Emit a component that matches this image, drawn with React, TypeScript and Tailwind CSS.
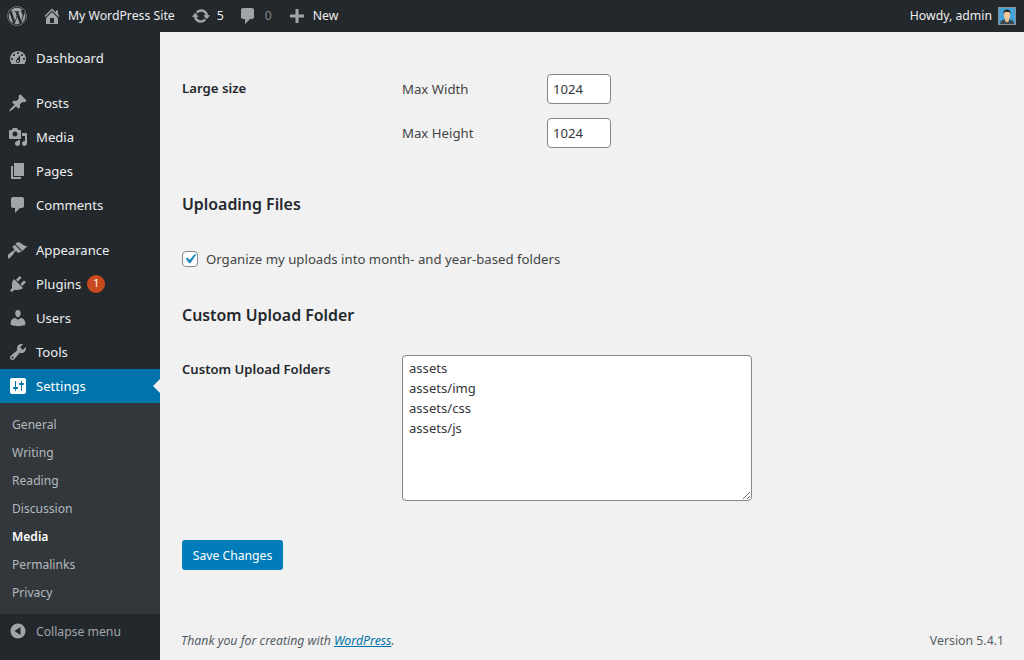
import React from 'react';
import { FaWordpress } from 'react-icons/fa';

// dashicons, 20x20
const icons: Record<string, string> = {
  dashboard:
    'M3.76 16h12.48c1.1-1.37 1.76-3.11 1.76-5 0-4.42-3.58-8-8-8s-8 3.58-8 8c0 1.89.66 3.63 1.76 5zM10 4c.55 0 1 .45 1 1s-.45 1-1 1-1-.45-1-1 .45-1 1-1zM6 6c.55 0 1 .45 1 1s-.45 1-1 1-1-.45-1-1 .45-1 1-1zm8 0c.55 0 1 .45 1 1s-.45 1-1 1-1-.45-1-1 .45-1 1-1zm-5.37 5.55L12 7v6c0 1.1-.9 2-2 2s-2-.9-2-2c0-.57.24-1.08.63-1.45zM4 10c.55 0 1 .45 1 1s-.45 1-1 1-1-.45-1-1 .45-1 1-1zm12 0c.55 0 1 .45 1 1s-.45 1-1 1-1-.45-1-1 .45-1 1-1zm-5 3c0-.55-.45-1-1-1s-1 .45-1 1 .45 1 1 1 1-.45 1-1z',
  post:
    'M10.44 3.02l1.82-1.82 6.36 6.35-1.83 1.82c-1.05-.68-2.48-.57-3.41.36l-.75.75c-.92.93-1.04 2.35-.35 3.41l-1.83 1.82-2.41-2.41-2.8 2.79c-.42.42-3.38 2.71-3.8 2.29s1.86-3.39 2.28-3.81l2.79-2.79L4.1 9.36l1.83-1.82c1.05.69 2.48.57 3.4-.36l.75-.75c.93-.92 1.05-2.35.36-3.41z',
  media:
    'M13 11V4c0-.55-.45-1-1-1h-1.67L9 1H5L3.67 3H2c-.55 0-1 .45-1 1v7c0 .55.45 1 1 1h10c.55 0 1-.45 1-1zM7 4.5c1.38 0 2.5 1.12 2.5 2.5S8.38 9.5 7 9.5 4.5 8.38 4.5 7 5.62 4.5 7 4.5zM14 6h5v10.5c0 1.38-1.12 2.5-2.5 2.5S14 17.88 14 16.5s1.12-2.5 2.5-2.5c.17 0 .34.02.5.05V9h-3V6zm-4 8.05V13h2v3.5c0 1.38-1.12 2.5-2.5 2.5S7 17.88 7 16.5 8.12 14 9.5 14c.17 0 .34.02.5.05z',
  page: 'M6 15V2h10v13H6zm-1 1h8v2H3V5h2v11z',
  comments:
    'M5 2h9c1.1 0 2 .9 2 2v7c0 1.1-.9 2-2 2h-2l-5 5v-5H5c-1.1 0-2-.9-2-2V4c0-1.1.9-2 2-2z',
  appearance:
    'M14.48 11.06L7.41 3.99l1.5-1.5c.5-.56 2.3-.47 3.51.32 1.21.8 1.43 1.28 2.91 2.1 1.18.64 2.45 1.26 4.45.85zm-.71.71L6.7 4.7 4.93 6.47c-.39.39-.39 1.02 0 1.41l1.06 1.06c.39.39.39 1.03 0 1.42-.6.6-6.54 3.86-6.99 6.42-.1.56 1.09 1.75 1.65 1.65 2.56-.45 5.82-6.39 6.42-6.99.39-.39 1.03-.39 1.42 0l1.06 1.06c.39.39 1.02.39 1.41 0z',
  plugin:
    'M13.11 4.36L9.87 7.6 8 5.73l3.24-3.24c.35-.34 1.05-.2 1.56.32.52.51.66 1.21.31 1.55zm-8 1.77l.91-1.12 9.01 9.01-1.19.84c-.71.71-2.63 1.16-3.82 1.16H6.14L4.9 17.26c-.59.59-1.54.59-2.12 0-.59-.58-.59-1.53 0-2.12l1.24-1.24v-3.88c0-1.13.4-3.19 1.09-3.89zm7.26 3.97l3.24-3.24c.34-.35 1.04-.21 1.55.31.52.51.66 1.21.31 1.55l-3.24 3.25z',
  users:
    'M10 9.25c-2.27 0-2.73-3.44-2.73-3.44C7 4.02 7.82 2 9.97 2c2.16 0 2.98 2.02 2.71 3.81 0 0-.41 3.44-2.68 3.44zm0 2.57L12.72 10c2.39 0 4.52 2.33 4.52 4.53v2.49s-3.65 1.13-7.24 1.13c-3.65 0-7.24-1.13-7.24-1.13v-2.49c0-2.25 1.94-4.48 4.47-4.48z',
  tools:
    'M16.68 9.77c-1.34 1.34-3.3 1.67-4.95.99l-5.41 6.52c-.99.99-2.59.99-3.58 0s-.99-2.59 0-3.57l6.52-5.42c-.68-1.65-.35-3.61.99-4.95 1.28-1.28 3.12-1.62 4.72-1.06l-2.89 2.89 2.82 2.82 2.86-2.87c.53 1.58.18 3.39-1.08 4.65zM3.81 16.21c.4.39 1.04.39 1.43 0 .4-.4.4-1.04 0-1.43-.39-.4-1.03-.4-1.43 0-.39.39-.39 1.03 0 1.43z',
  settings:
    'M18 16V4c0-1.1-.9-2-2-2H4c-1.1 0-2 .9-2 2v12c0 1.1.9 2 2 2h12c1.1 0 2-.9 2-2zM8 11h1c.55 0 1 .45 1 1s-.45 1-1 1H8v1.5c0 .28-.22.5-.5.5s-.5-.22-.5-.5V13H6c-.55 0-1-.45-1-1s.45-1 1-1h1V5.5c0-.28.22-.5.5-.5s.5.22.5.5V11zm5-2h-1c-.55 0-1-.45-1-1s.45-1 1-1h1V5.5c0-.28.22-.5.5-.5s.5.22.5.5V7h1c.55 0 1 .45 1 1s-.45 1-1 1h-1v5.5c0 .28-.22.5-.5.5s-.5-.22-.5-.5V9z',
  home: 'M16 8.5l1.53 1.53-1.06 1.06L10 4.62l-6.47 6.47-1.06-1.06L10 2.5l4 4v-2h2v4zm-6-2.46l6 5.99V18H4v-5.97zM12 17v-5H8v5h4z',
  update:
    'M10.2 3.28c3.53 0 6.43 2.61 6.92 6h2.08l-3.5 4-3.5-4h2.32c-.45-1.97-2.21-3.45-4.32-3.45-1.45 0-2.73.71-3.54 1.78L4.95 5.66C6.23 4.2 8.11 3.28 10.2 3.28zm-.4 13.44c-3.52 0-6.43-2.61-6.92-6H.8l3.5-4c1.17 1.33 2.33 2.67 3.5 4H5.48c.45 1.97 2.21 3.45 4.32 3.45 1.45 0 2.73-.71 3.54-1.78l1.71 1.95c-1.28 1.46-3.15 2.38-5.25 2.38z',
  plus: 'M17 8.500v3h-5.500V17h-3v-5.500H3v-3h5.500V3h3v5.500H17z',
  collapse:
    'M10 2.500c-4.100 0-7.500 3.400-7.500 7.500s3.400 7.500 7.500 7.500 7.500-3.400 7.500-7.500S14.100 2.500 10 2.500zM12.500 14l-6-4 6-4v8z',
  check: 'M14.83 4.89l1.34.94-5.81 8.38H9.02L5.78 9.67l1.34-1.25 2.57 2.4z',
};

const Icon: React.FC<{ name: string; className?: string }> = ({ name, className }) => (
  <svg viewBox="0 0 20 20" className={className} fill="currentColor" fillRule="evenodd">
    <path d={icons[name]} />
  </svg>
);

const menuGroups = [
  [{ name: 'dashboard', label: 'Dashboard' }],
  [
    { name: 'post', label: 'Posts' },
    { name: 'media', label: 'Media' },
    { name: 'page', label: 'Pages' },
    { name: 'comments', label: 'Comments' },
  ],
  [
    { name: 'appearance', label: 'Appearance' },
    { name: 'plugin', label: 'Plugins', badge: '1' },
    { name: 'users', label: 'Users' },
    { name: 'tools', label: 'Tools' },
  ],
];

const subItems = ['General', 'Writing', 'Reading', 'Discussion', 'Media', 'Permalinks', 'Privacy'];

const MenuRow: React.FC<{ name: string; label: string; badge?: string }> = ({ name, label, badge }) => (
  <div className="flex h-[34px] items-center text-[13.1px] text-[#eeeeee]">
    <Icon name={name} className="mx-[8px] h-5 w-5 text-[#a0a5aa]" />
    <span className="pt-[2px]">{label}</span>
    {badge && (
      <span className="ml-[6px] flex h-[18px] w-[18px] items-center justify-center rounded-full bg-[#ca4a1f] text-[10.5px] text-white">
        {badge}
      </span>
    )}
  </div>
);

const Sidebar = () => (
  <aside className="flex w-[160px] shrink-0 flex-col bg-[#23282d] pt-[9px]">
    {menuGroups.map((group, i) => (
      <div key={i} className={i > 0 ? 'mt-[11px]' : ''}>
        {group.map((item) => (
          <MenuRow key={item.label} {...item} />
        ))}
      </div>
    ))}
    <div className="relative flex h-[34px] items-center bg-[#0073aa] text-[13.1px] text-white">
      <Icon name="settings" className="mx-[8px] h-5 w-5 text-white" />
      <span className="pt-[2px]">Settings</span>
      <span className="absolute right-0 top-[10px] h-0 w-0 border-y-[7px] border-r-[7px] border-y-transparent border-r-[#f1f1f1]" />
    </div>
    <div className="bg-[#32373c] pt-[7px] pb-[8px] text-[12.1px] text-[#b4b9be]">
      {subItems.map((s) => (
        <div key={s} className={`flex h-[28px] items-center pl-[12px] pt-[2px] ${s === 'Media' ? 'font-semibold text-white' : ''}`}>
          {s}
        </div>
      ))}
    </div>
    <div className="flex h-[34px] items-center text-[12.2px] text-[#a0a5aa]">
      <Icon name="collapse" className="mx-[8px] h-5 w-5" />
      <span className="pt-[2px]">Collapse menu</span>
    </div>
  </aside>
);

const TopBar = () => (
  <header className="flex h-[32px] shrink-0 items-center justify-between bg-[#23282d] text-[12.25px] text-[#eeeeee]">
    <div className="flex items-center">
      <FaWordpress className="ml-[7px] h-[20px] w-[20px] text-[#a0a5aa]" />
      <Icon name="home" className="ml-[15px] h-5 w-5 text-[#a0a5aa]" />
      <span className="ml-[6px]">My WordPress Site</span>
      <Icon name="update" className="ml-[16px] h-5 w-5 text-[#a0a5aa]" />
      <span className="ml-[6px]">5</span>
      <Icon name="comments" className="ml-[14px] h-5 w-5 text-[#a0a5aa]" />
      <span className="ml-[7px] text-[#82878c]">0</span>
      <Icon name="plus" className="ml-[15px] h-5 w-5 text-[#a0a5aa]" />
      <span className="ml-[6px]">New</span>
    </div>
    <div className="mr-[8px] flex items-center">
      <span>Howdy, admin</span>
      <svg viewBox="0 0 18 18" className="ml-[6px] h-[18px] w-[18px]">
        <rect width="18" height="18" fill="#8a9199" />
        <rect x="1" y="1" width="16" height="16" fill="#45a5d8" />
        <path d="M2 17c0-3 2-4 4-4.500h6c2 .5 4 1.500 4 4.500z" fill="#3a4a55" />
        <path d="M7 11h4v3l-2 1.500L7 14z" fill="#f0c090" />
        <ellipse cx="9" cy="8" rx="3.200" ry="4.200" fill="#f3c79b" />
        <path d="M5.500 7.500C5 3.500 7 2.500 9 2.500s4 1 3.500 5c-.5-1.500-1-2.500-1.500-2.500H7c-.5 0-1 1-1.500 2.500z" fill="#2b2b2b" />
      </svg>
    </div>
  </header>
);

const NumberField: React.FC<{ label: string }> = ({ label }) => (
  <div className="flex items-center">
    <label className="w-[145px] pt-[2px]">{label}</label>
    <input
      type="text"
      defaultValue="1024"
      className="h-[30px] w-[64px] rounded-[4px] border border-[#7e8993] bg-white px-[5px] text-[13.1px] text-[#32373c] outline-none"
    />
  </div>
);

const Content = () => (
  <main className="flex min-w-0 flex-1 flex-col pl-[22px] pr-[20px] text-[13.2px] text-[#444444]">
    <div className="mt-[42px] flex">
      <div className="w-[220px] pt-[5px] font-semibold text-[#23282d]">Large size</div>
      <div className="flex flex-col gap-[14px]">
        <NumberField label="Max Width" />
        <NumberField label="Max Height" />
      </div>
    </div>

    <h2 className="mt-[44px] text-[15.9px] leading-[24px] font-semibold text-[#23282d]">Uploading Files</h2>

    <label className="mt-[33px] flex h-[20px] items-center">
      <span className="flex h-4 w-4 items-center justify-center rounded-[4px] border border-[#7e8993] bg-white">
        <Icon name="check" className="h-5 w-5 shrink-0 text-[#1e8cbe]" />
      </span>
      <span className="ml-[8px] pt-[2px]">Organize my uploads into month- and year-based folders</span>
    </label>

    <h2 className="mt-[34px] text-[15.9px] leading-[24px] font-semibold text-[#23282d]">Custom Upload Folder</h2>

    <div className="mt-[28px] flex">
      <div className="w-[220px] pt-[5px] text-[13.1px] font-semibold text-[#23282d]">Custom Upload Folders</div>
      <textarea
        defaultValue={'assets\nassets/img\nassets/css\nassets/js'}
        className="h-[146px] w-[350px] rounded-[4px] border border-[#7e8993] bg-white px-[6px] py-[2px] text-[13.1px] leading-[20px] text-[#32373c] outline-none"
      />
    </div>

    <div className="mt-[39px]">
      <button className="h-[30px] w-[101px] rounded-[3px] bg-[#007cba] pt-[2px] text-[12.2px] text-white">Save Changes</button>
    </div>

    <footer className="mt-auto flex items-center justify-between pb-[9px] text-[12.3px] leading-[20px] text-[#555d66]">
      <span className="-ml-px italic">
        Thank you for creating with <a className="text-[#0073aa] underline">WordPress</a>.
      </span>
      <span>Version 5.4.1</span>
    </footer>
  </main>
);

export default function App() {
  return (
    <div className="flex h-[660px] w-[1024px] flex-col overflow-hidden bg-[#f1f1f1] font-['Noto_Sans','Open_Sans',sans-serif]">
      <TopBar />
      <div className="flex min-h-0 flex-1">
        <Sidebar />
        <Content />
      </div>
    </div>
  );
}
